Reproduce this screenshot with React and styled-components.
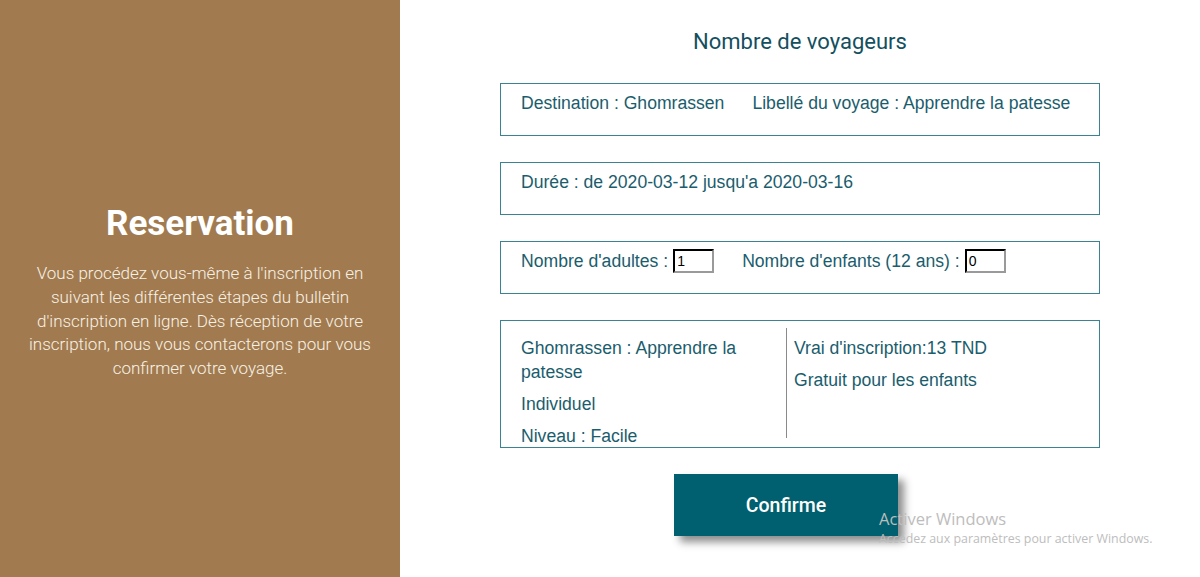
import React, { useState } from 'react';
import styled, { createGlobalStyle } from 'styled-components';

// styles globaux
const GlobalStyle = createGlobalStyle`
    html, body {
        margin: 0;
        padding: 0;
        background: #ffffff;
    }
    #root {
        height: 577px;
    }
`;

const Page = styled.div`
    display: flex;
    width: 1200px;
    height: 577px;
    overflow: hidden;
    position: relative;
`;

const Sidebar = styled.aside`
    width: 400px;
    flex-shrink: 0;
    background: #a17b4f;
    display: flex;
    flex-direction: column;
    align-items: center;
    justify-content: center;
    padding: 8px 28px 0;
    box-sizing: border-box;
    font-family: Roboto, 'Noto Sans', sans-serif;
    color: #ffffff;
    text-align: center;
`;

const SideTitle = styled.h1`
    margin: 0 0 18px;
    font-size: 35px;
    font-weight: 700;
    line-height: 40px;
`;

const SideText = styled.p`
    margin: 0;
    font-size: 17px;
    font-weight: 300;
    line-height: 23.8px;
    color: #f8f1e6;
`;

const Main = styled.main`
    flex: 1;
    display: flex;
    flex-direction: column;
    align-items: center;
    padding-top: 29px;
    font-family: 'Liberation Sans', Arial, sans-serif;
    color: #1a5d6d;
`;

const Title = styled.h2`
    margin: 0 0 28px;
    font-family: Roboto, 'Noto Sans', sans-serif;
    font-size: 22px;
    font-weight: 400;
    line-height: 26px;
    color: #134f5e;
`;

const Card = styled.section`
    box-sizing: border-box;
    width: 600px;
    height: ${(p) => p.$height || 53}px;
    margin-bottom: 26px;
    border: 1px solid #3b8393;
    padding: 7px 20px 0;
    display: flex;
    align-items: flex-start;
    gap: ${(p) => (p.$split ? '0' : '28px')};
    font-size: 17.6px;
    line-height: 24px;
`;

const Field = styled.label`
    display: flex;
    align-items: center;
    gap: 5px;
    white-space: nowrap;
`;

const NumberInput = styled.input`
    box-sizing: border-box;
    width: 41px;
    height: 24px;
    padding: 1px 2px;
    font-family: 'Liberation Sans', Arial, sans-serif;
    font-size: 14px;
    color: #000000;
    background: #ffffff;
    border: 2px inset #767676;
    border-top-color: #1a1a1a;
    border-left-color: #1a1a1a;
    border-right-color: #9a9a9a;
    border-bottom-color: #9a9a9a;
    outline: none;
`;

const InfoCol = styled.div`
    width: ${(p) => p.$width || 'auto'};
    height: 110px;
    box-sizing: border-box;
    padding-left: ${(p) => (p.$divider ? '7px' : '0')};
    border-left: ${(p) => (p.$divider ? '1px solid #8a8a8a' : 'none')};
`;

const InfoLine = styled.p`
    margin: 8px 0;
`;

const ButtonRow = styled.div`
    display: flex;
    justify-content: center;
    padding-right: 28px;
`;

const ConfirmButton = styled.button`
    width: 224px;
    height: 62px;
    border: none;
    background: #00606f;
    color: #ffffff;
    font-family: Roboto, 'Noto Sans', sans-serif;
    font-size: 19.5px;
    font-weight: 500;
    box-shadow: 6px 6px 8px rgba(0, 0, 0, 0.45);
    cursor: pointer;
`;

const Watermark = styled.div`
    position: absolute;
    left: 879px;
    top: 508px;
    font-family: 'Open Sans', 'Noto Sans', sans-serif;
    color: #bdbdbd;
    pointer-events: none;
`;

const WatermarkTitle = styled.div`
    font-size: 16.5px;
    line-height: 22px;
`;

const WatermarkText = styled.div`
    font-size: 12.4px;
    line-height: 18px;
`;

const App = () => {
    const [adultes, setAdultes] = useState('1');
    const [enfants, setEnfants] = useState('0');

    return (
        <>
            <GlobalStyle />
            <Page>
                <Sidebar>
                    <SideTitle>Reservation</SideTitle>
                    <SideText>
                        Vous procédez vous-même à l'inscription en suivant les différentes étapes du
                        bulletin d'inscription en ligne. Dès réception de votre inscription, nous vous
                        contacterons pour vous confirmer votre voyage.
                    </SideText>
                </Sidebar>

                <Main>
                    <Title>Nombre de voyageurs</Title>

                    <Card>
                        <span>Destination : Ghomrassen</span>
                        <span>Libellé du voyage : Apprendre la patesse</span>
                    </Card>

                    <Card>
                        <span>Durée : de 2020-03-12 jusqu'a 2020-03-16</span>
                    </Card>

                    <Card>
                        <Field>
                            Nombre d'adultes :
                            <NumberInput value={adultes} onChange={(e) => setAdultes(e.target.value)} />
                        </Field>
                        <Field>
                            Nombre d'enfants (12 ans) :
                            <NumberInput value={enfants} onChange={(e) => setEnfants(e.target.value)} />
                        </Field>
                    </Card>

                    <Card $height={128} $split>
                        <InfoCol $width="265px">
                            <InfoLine>Ghomrassen : Apprendre la patesse</InfoLine>
                            <InfoLine>Individuel</InfoLine>
                            <InfoLine>Niveau : Facile</InfoLine>
                        </InfoCol>
                        <InfoCol $divider>
                            <InfoLine>Vrai d'inscription:13 TND</InfoLine>
                            <InfoLine>Gratuit pour les enfants</InfoLine>
                        </InfoCol>
                    </Card>

                    <ButtonRow>
                        <ConfirmButton>Confirme</ConfirmButton>
                    </ButtonRow>
                </Main>

                <Watermark>
                    <WatermarkTitle>Activer Windows</WatermarkTitle>
                    <WatermarkText>Accédez aux paramètres pour activer Windows.</WatermarkText>
                </Watermark>
            </Page>
        </>
    );
};

export default App;
